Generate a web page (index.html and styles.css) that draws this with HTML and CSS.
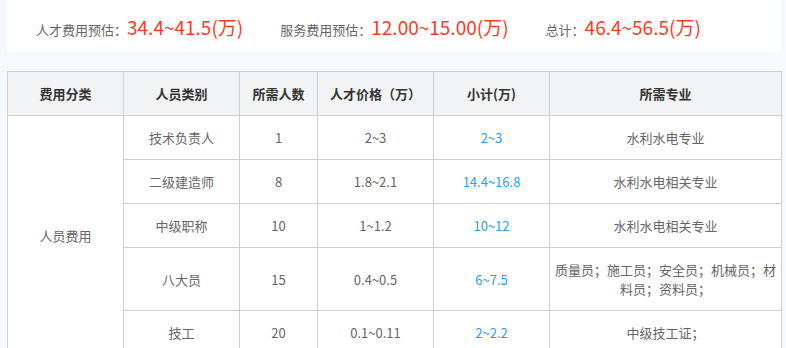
FILE: index.html
```html
<!DOCTYPE html>
<html lang="zh-CN">
<head>
<meta charset="utf-8">
<title>费用预估</title>
<link rel="stylesheet" href="styles.css">
</head>
<body>
<div class="page">
  <div class="summary">
    <div class="sum-item"><span class="sum-label">人才费用预估：</span><span class="sum-value">34.4~41.5(万)</span></div>
    <div class="sum-item"><span class="sum-label">服务费用预估：</span><span class="sum-value">12.00~15.00(万)</span></div>
    <div class="sum-item"><span class="sum-label">总计：</span><span class="sum-value">46.4~56.5(万)</span></div>
  </div>
  <table class="cost-table">
    <colgroup>
      <col class="c1"><col class="c2"><col class="c3"><col class="c4"><col class="c5"><col class="c6">
    </colgroup>
    <thead>
      <tr><th>费用分类</th><th>人员类别</th><th>所需人数</th><th>人才价格（万）</th><th>小计(万)</th><th>所需专业</th></tr>
    </thead>
    <tbody>
      <tr><td rowspan="5">人员费用</td><td>技术负责人</td><td>1</td><td>2~3</td><td class="sub">2~3</td><td>水利水电专业</td></tr>
      <tr><td>二级建造师</td><td>8</td><td>1.8~2.1</td><td class="sub">14.4~16.8</td><td>水利水电相关专业</td></tr>
      <tr><td>中级职称</td><td>10</td><td>1~1.2</td><td class="sub">10~12</td><td>水利水电相关专业</td></tr>
      <tr><td>八大员</td><td>15</td><td>0.4~0.5</td><td class="sub">6~7.5</td><td>质量员；施工员；安全员；机械员；材料员；资料员；</td></tr>
      <tr><td>技工</td><td>20</td><td>0.1~0.11</td><td class="sub">2~2.2</td><td>中级技工证；</td></tr>
    </tbody>
  </table>
</div>
</body>
</html>
```
FILE: styles.css
```css
html, body {
  margin: 0;
  padding: 0;
  background: #f5f9fc;
}
body {
  font-family: "Noto Sans CJK SC", "Liberation Sans", sans-serif;
  color: #666;
}
.page {
  padding: 0 5px 0 7px;
}
.summary {
  background: #fff;
  height: 52px;
  display: flex;
  align-items: center;
  padding: 0 0 0 29px;
  gap: 37px;
}
.sum-item {
  display: flex;
  align-items: baseline;
}
.sum-label {
  font-size: 13px;
  color: #666;
}
.sum-value {
  font-size: 19px;
  color: #ff3a1e;
}
.cost-table {
  margin-top: 19px;
  width: 774px;
  border-collapse: collapse;
  table-layout: fixed;
  background: #fff;
  font-size: 13px;
}
.c1, .c2, .c4, .c5 { width: 116px; }
.c3 { width: 78px; }
.c6 { width: 232px; }
.cost-table th,
.cost-table td {
  border: 1px solid #cfcfcf;
  text-align: center;
  vertical-align: middle;
  line-height: 19px;
  padding: 12px 5px;
}
.cost-table th {
  background: #f2f3f5;
  color: #333;
  font-weight: bold;
}
.cost-table td {
  color: #666;
}
.cost-table td.sub {
  color: #2a9ef5;
}
```
